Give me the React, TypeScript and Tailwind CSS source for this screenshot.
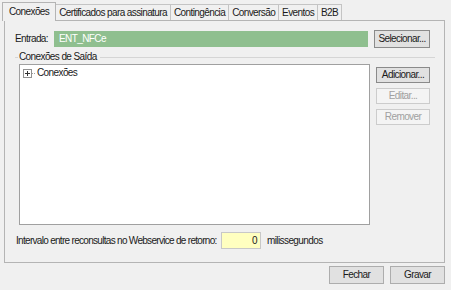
import { useState } from "react";

const tabs = [
    "Conexões",
    "Certificados para assinatura",
    "Contingência",
    "Conversão",
    "Eventos",
    "B2B",
];

function WinButton({
    label,
    disabled,
    focused,
    className = "",
}: {
    label: string;
    disabled?: boolean;
    focused?: boolean;
    className?: string;
}) {
    return (
        <button
            type="button"
            disabled={disabled}
            className={`flex items-center justify-center border ${
                disabled
                    ? "border-[#cccccc] bg-[#f4f4f4] text-[#a0a0a0]"
                    : focused
                    ? "border-[#8a8a8a] bg-[#e1e1e1] text-[#1a1a1a]"
                    : "border-[#adadad] bg-[#e1e1e1] text-[#1a1a1a]"
            } ${className}`}
        >
            {label}
        </button>
    );
}

export default function App() {
    const [active] = useState(0);

    return (
        <div
            className="w-[451px] h-[290px] bg-[#f0f0f0] text-[#1a1a1a] text-[10px] tracking-[-0.6px] leading-none overflow-hidden whitespace-nowrap"
            style={{ fontFamily: '"Liberation Sans", Arial, sans-serif' }}
        >
            {/* TABS */}
            <div className="flex items-end h-[20px] pl-[2px]">
                {tabs.map((t, i) =>
                    i === active ? (
                        <div
                            key={t}
                            className="relative z-10 -mb-px h-[19px] px-[6px] flex items-center border border-b-0 border-[#b4b4b4] bg-[#f0f0f0]"
                        >
                            {t}
                        </div>
                    ) : (
                        <div
                            key={t}
                            className="h-[16px] px-[3px] flex items-center border border-b-0 border-l-0 border-[#c4c4c4] bg-[#f0f0f0]"
                        >
                            {t}
                        </div>
                    )
                )}
            </div>

            {/* PANEL */}
            <div className="ml-[4px] w-[441px] h-[243px] border border-[#b4b4b4] flex flex-col">
                {/* ENTRADA */}
                <div className="mt-[9px] pl-[10px] flex items-center h-[18px]">
                    <span className="w-[39px]">Entrada:</span>
                    <div className="w-[314px] h-[16px] bg-[#8fbf8f] text-white flex items-center pl-[5px]">
                        ENT_NFCe
                    </div>
                    <WinButton label="Selecionar..." focused className="ml-[6px] w-[56px] h-[18px]" />
                </div>

                {/* GROUP TITLE */}
                <div className="mt-[3px] ml-[10px] w-[420px] h-[12px] flex items-center">
                    <div className="w-[3px] h-px bg-[#d5d5d5]" />
                    <span className="px-[1px]">Conexões de Saída</span>
                    <div className="flex-1 h-px bg-[#d5d5d5] ml-[2px]" />
                </div>

                {/* TREE + BUTTONS */}
                <div className="mt-[1px] pl-[14px] flex">
                    <div className="w-[351px] h-[161px] bg-white border border-[#a0a0a0] pt-[2px] pl-[3px]">
                        <div className="flex items-center h-[12px]">
                            <svg width="9" height="9" viewBox="0 0 9 9" className="shrink-0">
                                <rect x="0.5" y="0.5" width="8" height="8" fill="white" stroke="#919191" />
                                <path d="M2 4.5h5M4.5 2v5" stroke="#333" />
                            </svg>
                            <svg width="4" height="9" viewBox="0 0 4 9" className="shrink-0">
                                <path d="M0 4.5h1M2 4.5h1" stroke="#a0a0a0" />
                            </svg>
                            <span className="ml-[1px]">Conexões</span>
                        </div>
                    </div>
                    <div className="ml-[6px] mt-[3px] flex flex-col gap-[5px]">
                        <WinButton label="Adicionar..." focused className="w-[54px] h-[16px]" />
                        <WinButton label="Editar..." disabled className="w-[54px] h-[16px]" />
                        <WinButton label="Remover" disabled className="w-[54px] h-[16px]" />
                    </div>
                </div>

                {/* INTERVALO */}
                <div className="mt-[7px] pl-[11px] flex items-center h-[17px]">
                    <span className="w-[205px] tracking-[-0.7px]">Intervalo entre reconsultas no Webservice de retorno:</span>
                    <div className="w-[40px] h-[17px] bg-[#ffffc0] border border-[#c8c8c8] flex items-center justify-end pr-[3px]">
                        0
                    </div>
                    <span className="ml-[6px]">milissegundos</span>
                </div>
            </div>

            {/* FOOTER */}
            <div className="mt-[3px] pr-[6px] flex justify-end gap-[6px]">
                <WinButton label="Fechar" className="w-[55px] h-[18px]" />
                <WinButton label="Gravar" className="w-[55px] h-[18px]" />
            </div>
        </div>
    );
}
